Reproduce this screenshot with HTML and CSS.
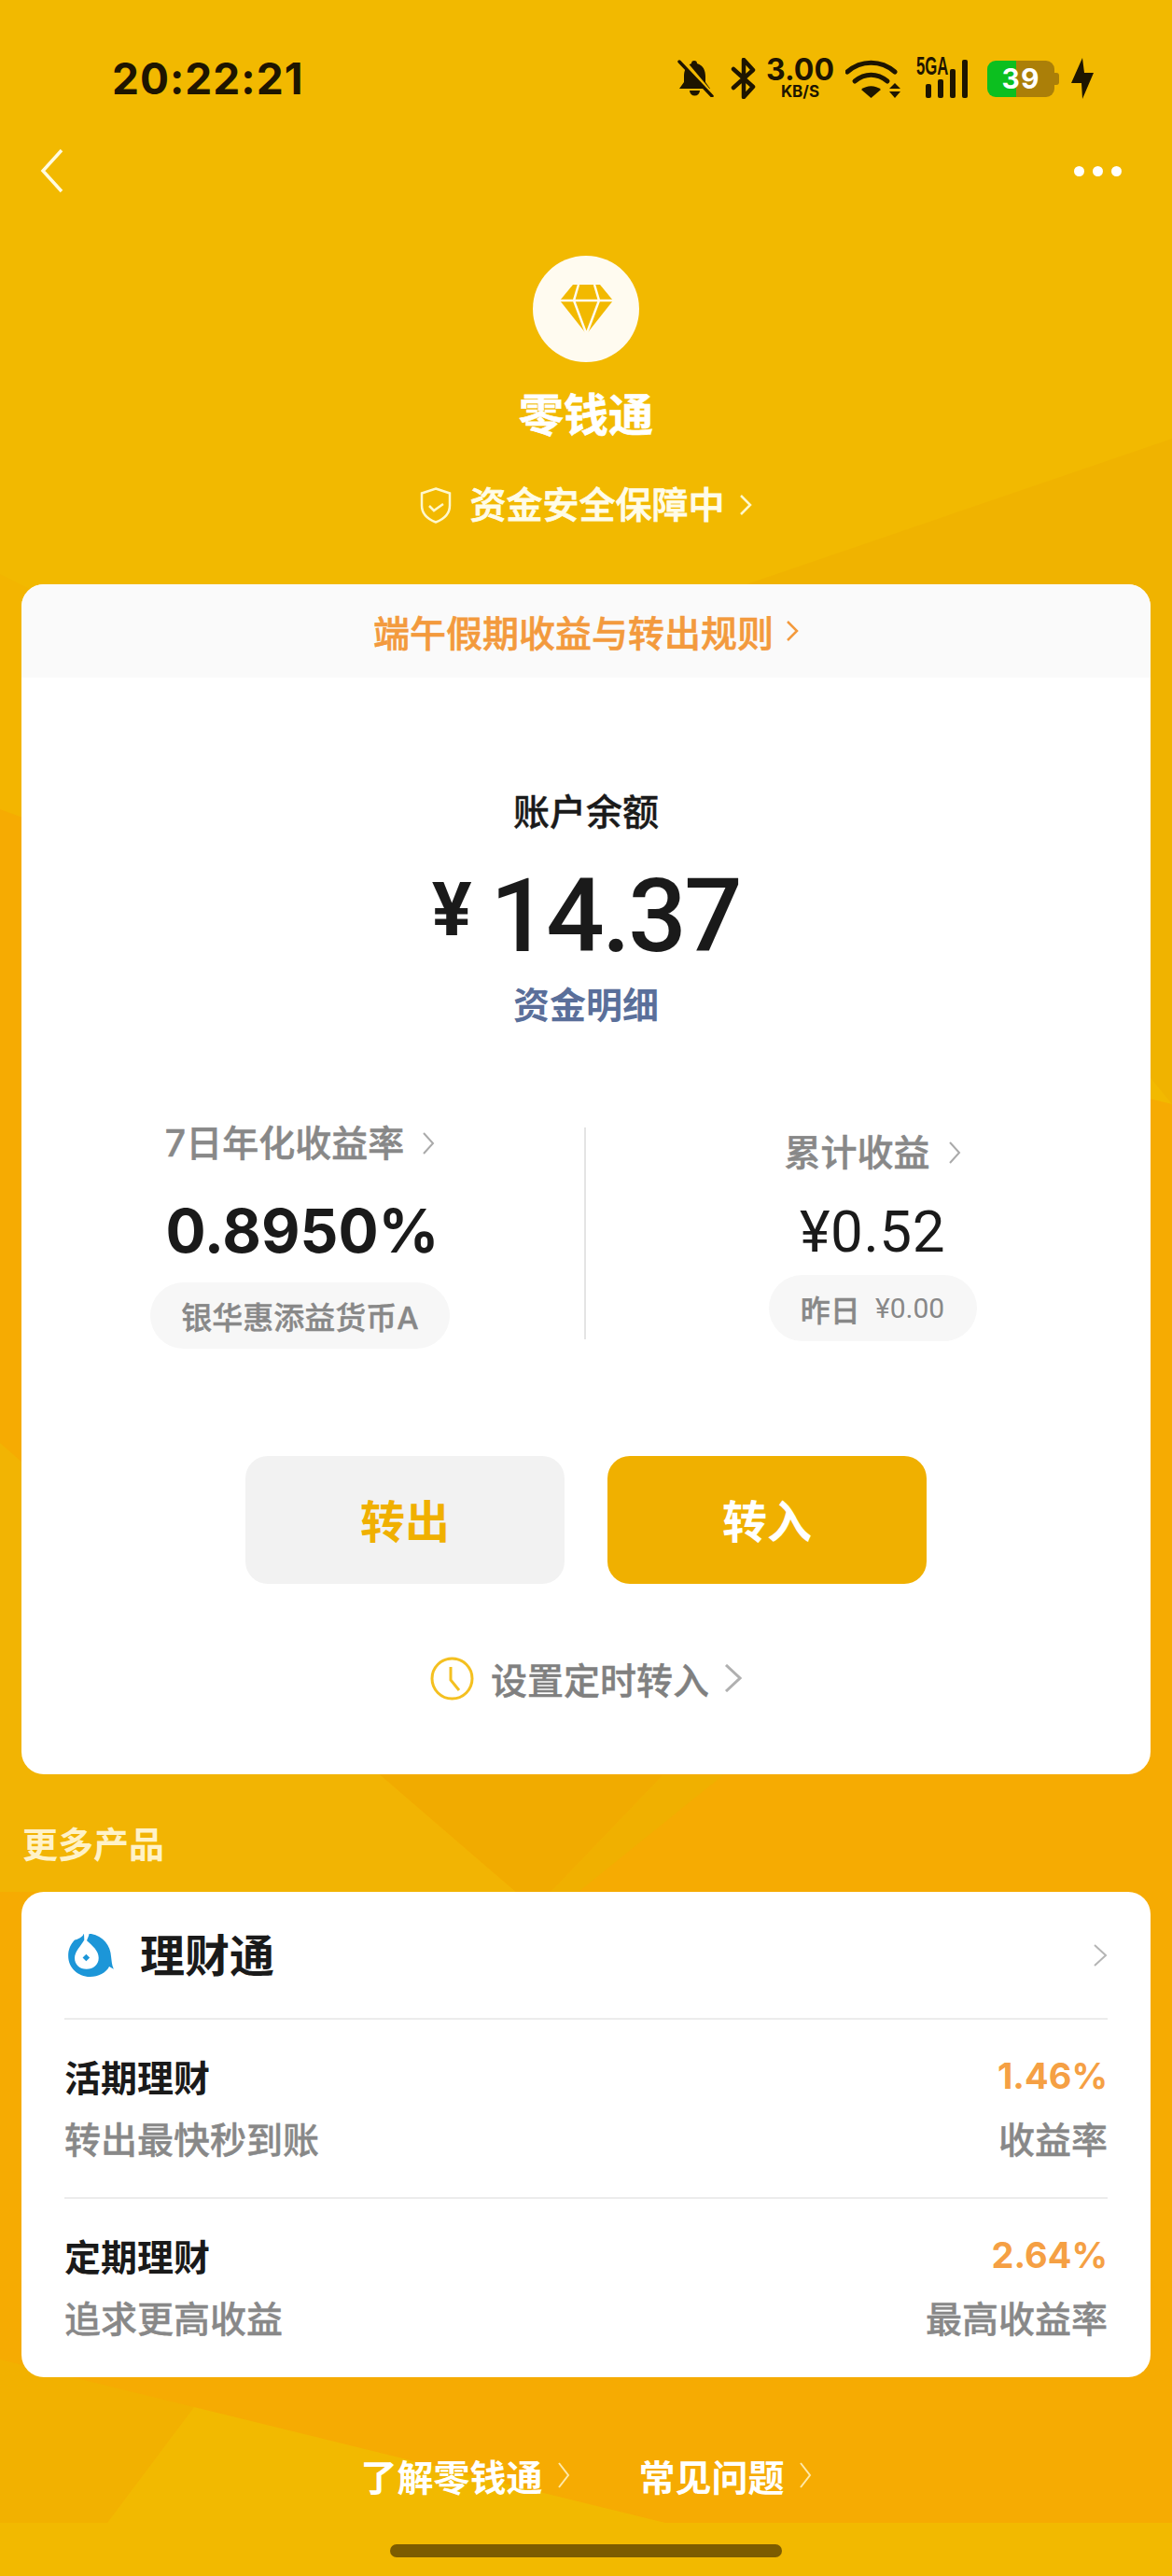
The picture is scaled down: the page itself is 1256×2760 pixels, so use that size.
FILE: index.html
```html
<!DOCTYPE html>
<html lang="zh-CN">
<head>
  <meta charset="UTF-8">
  <title>零钱通</title>
  <meta name="viewport" content="width=device-width, initial-scale=1.0">
  <link rel="stylesheet" href="styles.css">
</head>
<body>
  <div class="page">
    <!-- faceted background -->
    <svg class="bg" viewBox="0 0 1256 2760" preserveAspectRatio="none">
      <polygon fill="#f0b300" points="1256,470 800,626 1256,1183"/>
      <polygon fill="#f3b500" points="0,615 90,660 90,900 0,867"/>
      <polygon fill="#f6ab02" points="0,867 90,900 1256,1183 1256,2703 0,2703"/>
      <polygon fill="#f2b403" points="0,1546 408,1902 553,2027 0,2027"/>
      <polygon fill="#f1ab00" points="408,1902 710,1902 590,2027 553,2027"/>
      <polygon fill="#f0b000" points="710,1902 775,1902 620,2027 590,2027"/>
      <polygon fill="#f2b100" points="0,2528 208,2579 115,2703 0,2703"/>
      <polygon fill="#f2b900" points="208,2579 713,2703 115,2703"/>
    </svg>

    <div class="status">
      <span class="time">20:22:21</span>
      <div class="status-icons">
        <svg class="ic-bell" viewBox="0 0 40 40">
          <path fill="#1e1500" d="M19 1a3 3 0 0 1 3 3c7 2 9 8 9 14v6l5 7H3l5-7v-6c0-6 2-12 8-14a3 3 0 0 1 3-3zM14 33h11a5.500 5.500 0 0 1-11 0z"/>
          <path stroke="#f2b900" stroke-width="5" d="M6 0l32 38"/>
          <path stroke="#1e1500" stroke-width="3.400" stroke-linecap="round" d="M3 2l35 37"/>
        </svg>
        <svg class="ic-bt" viewBox="0 0 27 44">
          <path fill="none" stroke="#1e1500" stroke-width="4.500" stroke-linejoin="round" stroke-linecap="round" d="M3 12l21 19-10 11V2l10 11L3 32"/>
        </svg>
        <div class="speed">
          <span class="speed-num">3.00</span>
          <span class="speed-unit">KB/S</span>
        </div>
        <svg class="ic-wifi" viewBox="0 0 59 41">
          <g fill="none" stroke="#1e1500" stroke-width="5" stroke-linecap="round">
            <path d="M2 13c15-13 36-13 51 0"/>
            <path d="M10 23c11-9 24-9 35 0"/>
          </g>
          <path fill="#1e1500" d="M17 32c6-5 15-5 21 0L27.500 41z"/>
          <path fill="#1e1500" d="M53 25l6 6H47zM47 34h12l-6 7z"/>
        </svg>
        <div class="signal">
          <span class="signal-label">5GA</span>
          <i class="bar bar1"></i><i class="bar bar2"></i><i class="bar bar3"></i><i class="bar bar4"></i>
        </div>
        <div class="battery"><span>39</span></div>
        <svg class="ic-bolt" viewBox="0 0 24 44">
          <polygon fill="#1e1500" points="12,0 0,27 11,27 12,44 24,16 14,16"/>
        </svg>
      </div>
    </div>

    <div class="nav">
      <svg class="back" viewBox="0 0 26 48">
        <path d="M24 2L4 24l20 22"/>
      </svg>
      <div class="dots"><i></i><i></i><i></i></div>
    </div>

    <div class="brand">
      <div class="brand-icon">
        <svg viewBox="0 0 57 53" width="57" height="53">
          <polygon fill="#f2b900" points="14,0 43,0 57,17 28.500,53 0,17"/>
          <path fill="none" stroke="#fffbf0" stroke-width="2.500" d="M0 17h57M20 0l-5 17 13.500 36M37 0l5 17-13.500 36"/>
        </svg>
      </div>
      <h1 class="brand-title">零钱通</h1>
      <div class="safe">
        <svg class="ic-shield" viewBox="0 0 34 39">
          <path d="M17 1.500l15 5v13c0 9-7 15-15 18-8-3-15-9-15-18v-13z"/>
          <path d="M10 20l5 5 10-7"/>
        </svg>
        <span>资金安全保障中</span>
        <svg class="chev chev-safe" viewBox="0 0 14 24"><path d="M2 2l10 10L2 22"/></svg>
      </div>
    </div>

    <section class="card main-card">
      <div class="notice">
        <span>端午假期收益与转出规则</span>
        <svg class="chev chev-notice" viewBox="0 0 14 24"><path d="M2 2l10 10L2 22"/></svg>
      </div>

      <div class="balance">
        <div class="balance-label">账户余额</div>
        <div class="balance-amount"><span class="yen">¥</span><span>14.37</span></div>
        <div class="balance-link">资金明细</div>
      </div>

      <div class="stats">
        <div class="stat stat-left">
          <div class="stat-title">
            <span>7日年化收益率</span>
            <svg class="chev chev-gray" viewBox="0 0 14 24"><path d="M2 1l10 11L2 23"/></svg>
          </div>
          <div class="rate">0.8950%</div>
          <div class="pill">银华惠添益货币A</div>
        </div>
        <div class="stat stat-right">
          <div class="stat-title">
            <span>累计收益</span>
            <svg class="chev chev-gray" viewBox="0 0 14 24"><path d="M2 1l10 11L2 23"/></svg>
          </div>
          <div class="earned">¥0.52</div>
          <div class="pill pill-small">昨日<span class="pill-num">¥0.00</span></div>
        </div>
      </div>

      <div class="actions">
        <div class="btn btn-out">转出</div>
        <div class="btn btn-in">转入</div>
      </div>

      <div class="timer">
        <svg class="ic-clock" viewBox="0 0 47 47">
          <circle cx="23.500" cy="23.500" r="21.500"/>
          <path d="M22 11v14l9 11"/>
        </svg>
        <span>设置定时转入</span>
        <svg class="chev chev-timer" viewBox="0 0 19 30"><path d="M2 1l15 14L2 29"/></svg>
      </div>
    </section>

    <h2 class="more-title">更多产品</h2>

    <section class="card product-card">
      <div class="product-head">
        <svg class="logo" viewBox="0 0 142 140">
          <path fill="#1c96d8" d="M48 3C46 12 30 20 20 22 6 38 0 52 0 72c0 36 30 65 68 65 26 0 50-12 60-32l14 8c-6-13-6-23-8-38C132 40 110 10 72 3z"/>
          <path fill="#fff" d="M49 0h17c-2 10-6 18-8 24 17 16 37 31 37 54 0 22-17 35-38 35S20 100 20 78c0-20 22-40 30-56z"/>
          <path fill="#1c96d8" d="M56 66l11 11-11 11-11-11z"/>
        </svg>
        <span class="product-name">理财通</span>
        <svg class="chev chev-light" viewBox="0 0 16 24"><path d="M2 1l12 11L2 23"/></svg>
      </div>

      <div class="product-row">
        <div class="row-line">
          <span class="row-name">活期理财</span>
          <span class="row-rate">1.46%</span>
        </div>
        <div class="row-line">
          <span class="row-sub">转出最快秒到账</span>
          <span class="row-sub">收益率</span>
        </div>
      </div>

      <div class="product-row">
        <div class="row-line">
          <span class="row-name">定期理财</span>
          <span class="row-rate">2.64%</span>
        </div>
        <div class="row-line">
          <span class="row-sub">追求更高收益</span>
          <span class="row-sub">最高收益率</span>
        </div>
      </div>
    </section>

    <div class="links">
      <div class="link-item">
        <span>了解零钱通</span>
        <svg class="chev chev-link" viewBox="0 0 14 28"><path d="M2 1l10 13L2 27"/></svg>
      </div>
      <div class="link-item">
        <span>常见问题</span>
        <svg class="chev chev-link" viewBox="0 0 14 28"><path d="M2 1l10 13L2 27"/></svg>
      </div>
    </div>

    <div class="home-bar"></div>
  </div>
</body>
</html>
```

FILE: styles.css
```css
* { margin: 0; padding: 0; box-sizing: border-box; }
body {
  background: #f2b900;
  font-family: Inter, "Noto Sans CJK SC", sans-serif;
  color: #1a1a1a;
}
.page {
  position: relative;
  width: 1256px;
  height: 2760px;
  overflow: hidden;
  background: #f2b900;
}
.bg {
  position: absolute;
  left: 0;
  top: 0;
  width: 1256px;
  height: 2760px;
}

/* status bar */
.status {
  position: relative;
  display: flex;
  align-items: center;
  justify-content: space-between;
  height: 48px;
  margin-top: 60px;
  padding: 0 84px 0 120px;
  color: #1e1500;
}
.time {
  font-size: 46px;
  font-weight: 700;
  letter-spacing: 1px;
}
.status-icons {
  display: flex;
  align-items: center;
  height: 48px;
}
.ic-bell { width: 40px; height: 40px; }
.ic-bt { width: 27px; height: 44px; margin-left: 18px; }
.speed {
  display: flex;
  flex-direction: column;
  align-items: center;
  width: 69px;
  margin-left: 13px;
}
.speed-num {
  font-size: 32px;
  font-weight: 700;
  line-height: 28px;
}
.speed-unit {
  font-size: 17px;
  font-weight: 700;
  line-height: 18px;
}
.ic-wifi { width: 59px; height: 41px; margin-left: 14px; }
.signal {
  position: relative;
  display: flex;
  align-items: flex-end;
  justify-content: flex-end;
  gap: 7px;
  width: 55px;
  height: 42px;
  margin-left: 17px;
}
.signal-label {
  position: absolute;
  left: 0;
  top: -3px;
  font-family: "Liberation Sans", sans-serif;
  font-size: 27px;
  font-weight: 700;
  line-height: 22px;
  transform: scaleX(0.62);
  transform-origin: left center;
}
.bar {
  display: block;
  width: 6px;
  background: #1e1500;
  border-radius: 2px;
}
.bar1 { height: 15px; }
.bar2 { height: 20px; }
.bar3 { height: 31px; }
.bar4 { height: 41px; }
.battery {
  position: relative;
  display: flex;
  align-items: center;
  justify-content: center;
  width: 72px;
  height: 39px;
  margin-left: 21px;
  margin-right: 5px;
  border-radius: 9px;
  background: linear-gradient(90deg, #0cbf1f 31px, #ab7f08 31px);
  color: #fff;
  font-size: 30px;
  font-weight: 700;
  letter-spacing: 1px;
}
.battery::after {
  content: "";
  position: absolute;
  right: -5px;
  top: 13px;
  width: 5px;
  height: 13px;
  border-radius: 0 3px 3px 0;
  background: #ab7f08;
}
.ic-bolt { width: 24px; height: 44px; margin-left: 13px; }

/* top nav */
.nav {
  position: relative;
  display: flex;
  align-items: center;
  justify-content: space-between;
  height: 48px;
  margin-top: 51px;
  padding: 0 54px 0 42px;
}
.back { width: 26px; height: 48px; }
.back path {
  fill: none;
  stroke: #fffbe0;
  stroke-width: 3.500;
}
.dots {
  display: flex;
  gap: 9px;
}
.dots i {
  display: block;
  width: 11px;
  height: 11px;
  border-radius: 50%;
  background: #fff;
}

/* brand */
.brand {
  position: relative;
  display: flex;
  flex-direction: column;
  align-items: center;
  padding-top: 67px;
}
.brand-icon {
  display: flex;
  align-items: center;
  justify-content: center;
  width: 114px;
  height: 114px;
  border-radius: 50%;
  background: #fffbf0;
}
.brand-title {
  height: 60px;
  margin-top: 27px;
  font-size: 48px;
  font-weight: 700;
  line-height: 60px;
  color: #fff;
  -webkit-text-stroke: 0.6px #fff;
}
.safe {
  display: flex;
  align-items: center;
  height: 50px;
  margin-top: 41px;
  font-size: 39px;
  font-weight: 500;
  line-height: 50px;
  color: #fffce8;
  -webkit-text-stroke: 0.8px #fffce8;
}
.ic-shield { width: 34px; height: 39px; margin-right: 19px; }
.ic-shield path {
  fill: none;
  stroke: #fff8cc;
  stroke-width: 2.500;
}
.chev { fill: none; }
.chev path { fill: none; stroke-width: 2.500; }
.chev-safe { width: 14px; height: 24px; margin-left: 15px; }
.chev-safe path { stroke: #fff8cc; }

/* cards */
.card {
  position: relative;
  margin: 0 23px;
  background: #fff;
  border-radius: 24px;
  overflow: hidden;
}
.main-card {
  height: 1275px;
  margin-top: 60px;
}
.notice {
  display: flex;
  align-items: center;
  justify-content: center;
  height: 100px;
  background: #fafafa;
  font-size: 39px;
  font-weight: 500;
  color: #f39a3d;
  -webkit-text-stroke: 0.6px #f39a3d;
}
.chev-notice { width: 14px; height: 24px; margin-left: 13px; }
.chev-notice path { stroke: #f39a3d; }

.balance {
  display: flex;
  flex-direction: column;
  align-items: center;
  padding-top: 119px;
}
.balance-label {
  height: 50px;
  font-size: 39px;
  line-height: 50px;
  font-weight: 500;
  -webkit-text-stroke: 0.4px #1a1a1a;
}
.balance-amount {
  display: flex;
  align-items: center;
  height: 100px;
  margin-top: 37px;
  font-family: Roboto, sans-serif;
  font-size: 110px;
  font-weight: 500;
  line-height: 100px;
  letter-spacing: -2.500px;
}
.yen {
  margin-right: 22px;
  margin-top: -14px;
  font-size: 80px;
  font-weight: 700;
}
.balance-link {
  height: 50px;
  margin-top: 20px;
  font-size: 39px;
  font-weight: 700;
  line-height: 50px;
  color: #5a6f9a;
}

.stats {
  display: grid;
  grid-template-columns: 1fr 1fr;
  grid-template-rows: 227px;
  height: 227px;
  margin-top: 106px;
}
.stat {
  display: flex;
  flex-direction: column;
  align-items: center;
}
.stat-left {
  padding-right: 6px;
  border-right: 2px solid #e4e4e4;
}
.stat-right { padding-left: 9px; }
.stat-title {
  display: flex;
  align-items: center;
  height: 40px;
  font-size: 39px;
  font-weight: 500;
  line-height: 40px;
  color: #888;
  -webkit-text-stroke: 0.5px #888;
}
.stat-left .stat-title { margin-top: -3px; }
.stat-right .stat-title { margin-top: 7px; }
.chev-gray { width: 14px; height: 24px; margin-left: 19px; }
.chev-gray path { stroke: #aaa; stroke-width: 2; }
.rate {
  height: 70px;
  margin: 39px 0 0 5px;
  font-size: 64px;
  font-weight: 700;
  line-height: 70px;
}
.earned {
  height: 70px;
  margin-top: 30px;
  font-family: Roboto, sans-serif;
  font-size: 62px;
  font-weight: 400;
  line-height: 70px;
  letter-spacing: 0.5px;
}
.pill {
  display: flex;
  align-items: center;
  justify-content: center;
  flex: none;
  width: 321px;
  height: 71px;
  margin-top: 20px;
  border-radius: 36px;
  background: #f7f7f7;
  font-size: 33px;
  font-weight: 500;
  color: #888;
  -webkit-text-stroke: 0.4px #888;
}
.pill-small {
  width: 223px;
  margin-top: 11px;
  font-size: 32px;
}
.pill-num {
  margin-left: 16px;
  font-family: Roboto, sans-serif;
  font-size: 30px;
  font-weight: 400;
  -webkit-text-stroke: 0;
}

.actions {
  display: flex;
  justify-content: center;
  gap: 46px;
  margin-top: 125px;
}
.btn {
  display: flex;
  align-items: center;
  justify-content: center;
  width: 342px;
  height: 137px;
  padding-bottom: 4px;
  border-radius: 24px;
  font-size: 48px;
  font-weight: 700;
}
.btn-out { background: #f2f2f2; color: #f0b000; }
.btn-in { background: #f0b000; color: #fff; }

.timer {
  display: flex;
  align-items: center;
  justify-content: center;
  height: 50px;
  margin-top: 76px;
  font-size: 39px;
  font-weight: 500;
  color: #808080;
  -webkit-text-stroke: 0.4px #808080;
}
.ic-clock { width: 47px; height: 47px; margin-right: 18px; }
.ic-clock circle, .ic-clock path {
  fill: none;
  stroke: #f4c020;
  stroke-width: 3;
}
.chev-timer { width: 19px; height: 30px; margin-left: 16px; }
.chev-timer path { stroke: #b0b0b0; stroke-width: 3; }

/* more products */
.more-title {
  position: relative;
  height: 50px;
  margin: 50px 0 0 24px;
  font-size: 38px;
  font-weight: 700;
  line-height: 50px;
  color: #fff2c8;
}
.product-card {
  height: 520px;
  margin-top: 26px;
  padding: 0 46px;
}
.product-head {
  display: flex;
  align-items: center;
  height: 137px;
  border-bottom: 2px solid #ececec;
}
.logo { width: 49px; height: 48px; margin: 0 28px 0 4px; }
.product-name {
  flex: 1;
  margin-bottom: 6px;
  font-size: 48px;
  font-weight: 700;
}
.chev-light { width: 16px; height: 24px; }
.chev-light path { stroke: #b5b5b5; stroke-width: 2; }
.product-row {
  height: 192px;
  padding-top: 35px;
  border-bottom: 2px solid #ececec;
}
.product-row:last-child { border-bottom: none; }
.row-line {
  display: flex;
  align-items: center;
  justify-content: space-between;
  height: 50px;
  margin-bottom: 16px;
}
.row-name {
  font-size: 39px;
  font-weight: 700;
}
.row-rate {
  font-size: 38px;
  font-weight: 700;
  color: #f5a044;
}
.row-sub {
  font-size: 39px;
  font-weight: 500;
  color: #888;
  -webkit-text-stroke: 0.4px #888;
}

/* bottom links */
.links {
  position: relative;
  display: flex;
  justify-content: center;
  gap: 74px;
  height: 50px;
  margin-top: 80px;
}
.link-item {
  display: flex;
  align-items: center;
  font-size: 39px;
  font-weight: 700;
  color: #fff;
}
.chev-link { width: 14px; height: 28px; margin-left: 15px; }
.chev-link path { stroke: #ffe9a8; stroke-width: 2; }
.home-bar {
  position: relative;
  width: 420px;
  height: 14px;
  margin: 49px auto 0;
  border-radius: 7px;
  background: #7d5c00;
}
```
